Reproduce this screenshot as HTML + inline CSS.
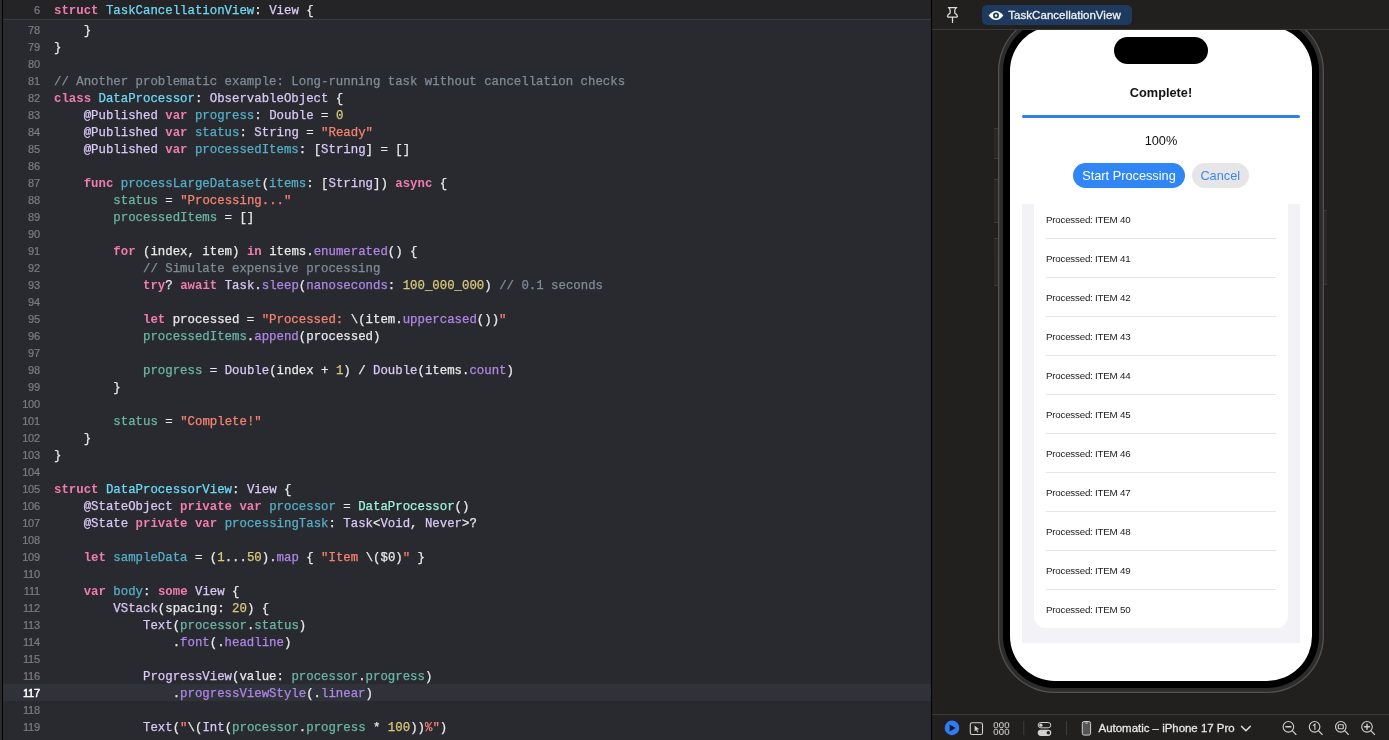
<!DOCTYPE html>
<html><head><meta charset="utf-8">
<style>
*{box-sizing:border-box;margin:0;padding:0}
html,body{width:1389px;height:740px;overflow:hidden;background:#1e1e1e}
body{position:relative;font-family:"Liberation Sans",sans-serif}
#editor{position:absolute;left:0;top:0;width:931px;height:740px;background:#292a30;overflow:hidden;will-change:transform}
#lstrip{position:absolute;left:0;top:0;width:2px;height:740px;background:#2a2a2c}
#lline{position:absolute;left:2px;top:0;width:1px;height:740px;background:#000}
.row{position:absolute;left:3px;width:928px;height:17px;font-family:"Liberation Mono",monospace;white-space:pre;color:#e8e8e9}
.row.cur{background:#2f3239}
.ln{position:absolute;right:891.2px;top:2.5px;font-family:"Liberation Sans",sans-serif;font-size:11px;letter-spacing:-0.25px;line-height:13px;color:#7c7c80;text-align:right;-webkit-text-stroke:0.2px currentColor}
.cur .ln{color:#ffffff;-webkit-text-stroke:0.45px #fff}
.code{position:absolute;left:51px;top:2.5px;font-size:12.36px;line-height:14px;-webkit-text-stroke:0.25px currentColor}
.sticky{position:absolute;left:0;top:0;width:931px;height:20px;background:#242427;border-bottom:1px solid #3a3a40}
.k{color:#f07cb0;font-weight:bold;-webkit-text-stroke:0}
.t{color:#dac8f6}
.f{color:#af86e6}
.d{color:#55afc8}
.dt{color:#6ed9f6}
.p{color:#6ab6a5}
.pt{color:#9ef1dd}
.s{color:#f88271}
.n{color:#d9c97c}
.c{color:#7f8c98}
#div{position:absolute;left:931px;top:0;width:1px;height:740px;background:#000}
#canvas{position:absolute;left:932px;top:0;width:457px;height:740px;background:#22201f;overflow:hidden;will-change:transform}
#topbar{position:absolute;left:0;top:0;width:457px;height:30px;border-bottom:1px solid #3a3a3a}
#botbar{position:absolute;left:0;top:714px;width:457px;height:26px;border-top:1px solid #3a3a3a;background:#22201f}

.btn{position:absolute;width:5px;background:#2a2827;border-top:1px solid #3a3938;border-bottom:1px solid #3a3938}
#phone{position:absolute;left:66px;top:0;width:326px;height:693px}
#rim{position:absolute;left:0;top:13.5px;width:326px;height:679px;border-radius:57px;background:#2c2c2c;box-shadow:inset 0 0 0 1.3px #525150}
#bezel{position:absolute;left:5px;top:18.5px;width:316px;height:669px;border-radius:52px;background:#000}
#screen{position:absolute;left:12px;top:25.5px;width:302px;height:655.5px;border-radius:45px;background:#fff;overflow:hidden}
#island{position:absolute;left:104px;top:11.2px;width:94px;height:27.2px;border-radius:13.6px;background:#000}
#title{position:absolute;left:0;width:302px;top:59px;text-align:center;font-weight:bold;font-size:12.75px;line-height:15px;color:#111}
#pbar{position:absolute;left:12px;top:89.5px;width:278px;height:3px;border-radius:2px;background:#2f80ee}
#pct{position:absolute;left:0;width:302px;top:107px;text-align:center;font-size:12.75px;line-height:15px;color:#111}
#bstart{position:absolute;left:63px;top:137.5px;width:112px;height:25.4px;border-radius:12.7px;background:#2f86f4;color:#fff;font-size:12.75px;line-height:26.6px;text-align:center}
#bcancel{position:absolute;left:181.5px;top:137.5px;width:57.5px;height:25.4px;border-radius:12.7px;background:#e6e6e9;color:#3f88ea;font-size:12.75px;line-height:26.6px;text-align:center}
#list{position:absolute;left:12px;top:178.5px;width:278px;height:439px;background:#f2f2f7;overflow:hidden}
#card{position:absolute;left:12px;top:-200px;width:254px;height:624px;background:#fff;border-radius:12px}
.it{position:absolute;left:12px;font-size:9.75px;letter-spacing:-0.22px;line-height:12px;color:#1a1a1a;white-space:nowrap}
.sep{position:absolute;left:12px;width:230px;height:1px;background:#e7e7ea}
#topbar{background:#22201f}
#pin{position:absolute;left:14px;top:6px}
#badge{position:absolute;left:50px;top:5px;width:150px;height:19.5px;border-radius:5px;background:#1e3a5e}
#eye{position:absolute;left:5.8px;top:5px}
#badge span{position:absolute;left:26.3px;top:3px;font-size:11.5px;letter-spacing:0.04px;line-height:14px;color:#f0f0f0;white-space:nowrap;-webkit-text-stroke:0.3px #f0f0f0}
</style></head><body>
<div id="editor">
<div class="row" style="top:21px"><span class="ln">78</span><span class="code">    }</span></div>
<div class="row" style="top:38px"><span class="ln">79</span><span class="code">}</span></div>
<div class="row" style="top:55px"><span class="ln">80</span><span class="code"></span></div>
<div class="row" style="top:72px"><span class="ln">81</span><span class="code"><span class="c">// Another problematic example: Long-running task without cancellation checks</span></span></div>
<div class="row" style="top:89px"><span class="ln">82</span><span class="code"><span class="k">class</span> <span class="dt">DataProcessor</span>: <span class="t">ObservableObject</span> {</span></div>
<div class="row" style="top:106px"><span class="ln">83</span><span class="code">    <span class="t">@Published</span> <span class="k">var</span> <span class="d">progress</span>: <span class="t">Double</span> = <span class="n">0</span></span></div>
<div class="row" style="top:123px"><span class="ln">84</span><span class="code">    <span class="t">@Published</span> <span class="k">var</span> <span class="d">status</span>: <span class="t">String</span> = <span class="s">&quot;Ready&quot;</span></span></div>
<div class="row" style="top:140px"><span class="ln">85</span><span class="code">    <span class="t">@Published</span> <span class="k">var</span> <span class="d">processedItems</span>: [<span class="t">String</span>] = []</span></div>
<div class="row" style="top:157px"><span class="ln">86</span><span class="code"></span></div>
<div class="row" style="top:174px"><span class="ln">87</span><span class="code">    <span class="k">func</span> <span class="d">processLargeDataset</span>(<span class="d">items</span>: [<span class="t">String</span>]) <span class="k">async</span> {</span></div>
<div class="row" style="top:191px"><span class="ln">88</span><span class="code">        <span class="p">status</span> = <span class="s">&quot;Processing...&quot;</span></span></div>
<div class="row" style="top:208px"><span class="ln">89</span><span class="code">        <span class="p">processedItems</span> = []</span></div>
<div class="row" style="top:225px"><span class="ln">90</span><span class="code"></span></div>
<div class="row" style="top:242px"><span class="ln">91</span><span class="code">        <span class="k">for</span> (index, item) <span class="k">in</span> items.<span class="f">enumerated</span>() {</span></div>
<div class="row" style="top:259px"><span class="ln">92</span><span class="code">            <span class="c">// Simulate expensive processing</span></span></div>
<div class="row" style="top:276px"><span class="ln">93</span><span class="code">            <span class="k">try</span>? <span class="k">await</span> <span class="t">Task</span>.<span class="f">sleep</span>(<span class="f">nanoseconds</span>: <span class="n">100_000_000</span>) <span class="c">// 0.1 seconds</span></span></div>
<div class="row" style="top:293px"><span class="ln">94</span><span class="code"></span></div>
<div class="row" style="top:310px"><span class="ln">95</span><span class="code">            <span class="k">let</span> processed = <span class="s">&quot;Processed: </span>\(item.<span class="f">uppercased</span>())<span class="s">&quot;</span></span></div>
<div class="row" style="top:327px"><span class="ln">96</span><span class="code">            <span class="p">processedItems</span>.<span class="f">append</span>(processed)</span></div>
<div class="row" style="top:344px"><span class="ln">97</span><span class="code"></span></div>
<div class="row" style="top:361px"><span class="ln">98</span><span class="code">            <span class="p">progress</span> = <span class="t">Double</span>(index + <span class="n">1</span>) / <span class="t">Double</span>(items.<span class="f">count</span>)</span></div>
<div class="row" style="top:378px"><span class="ln">99</span><span class="code">        }</span></div>
<div class="row" style="top:395px"><span class="ln">100</span><span class="code"></span></div>
<div class="row" style="top:412px"><span class="ln">101</span><span class="code">        <span class="p">status</span> = <span class="s">&quot;Complete!&quot;</span></span></div>
<div class="row" style="top:429px"><span class="ln">102</span><span class="code">    }</span></div>
<div class="row" style="top:446px"><span class="ln">103</span><span class="code">}</span></div>
<div class="row" style="top:463px"><span class="ln">104</span><span class="code"></span></div>
<div class="row" style="top:480px"><span class="ln">105</span><span class="code"><span class="k">struct</span> <span class="dt">DataProcessorView</span>: <span class="t">View</span> {</span></div>
<div class="row" style="top:497px"><span class="ln">106</span><span class="code">    <span class="t">@StateObject</span> <span class="k">private</span> <span class="k">var</span> <span class="d">processor</span> = <span class="pt">DataProcessor</span>()</span></div>
<div class="row" style="top:514px"><span class="ln">107</span><span class="code">    <span class="t">@State</span> <span class="k">private</span> <span class="k">var</span> <span class="d">processingTask</span>: <span class="t">Task</span>&lt;<span class="t">Void</span>, <span class="t">Never</span>&gt;?</span></div>
<div class="row" style="top:531px"><span class="ln">108</span><span class="code"></span></div>
<div class="row" style="top:548px"><span class="ln">109</span><span class="code">    <span class="k">let</span> <span class="d">sampleData</span> = (<span class="n">1</span>...<span class="n">50</span>).<span class="f">map</span> { <span class="s">&quot;Item </span>\($0)<span class="s">&quot;</span> }</span></div>
<div class="row" style="top:565px"><span class="ln">110</span><span class="code"></span></div>
<div class="row" style="top:582px"><span class="ln">111</span><span class="code">    <span class="k">var</span> <span class="d">body</span>: <span class="k">some</span> <span class="t">View</span> {</span></div>
<div class="row" style="top:599px"><span class="ln">112</span><span class="code">        <span class="t">VStack</span>(spacing: <span class="n">20</span>) {</span></div>
<div class="row" style="top:616px"><span class="ln">113</span><span class="code">            <span class="t">Text</span>(<span class="p">processor</span>.<span class="p">status</span>)</span></div>
<div class="row" style="top:633px"><span class="ln">114</span><span class="code">                .<span class="f">font</span>(.<span class="f">headline</span>)</span></div>
<div class="row" style="top:650px"><span class="ln">115</span><span class="code"></span></div>
<div class="row" style="top:667px"><span class="ln">116</span><span class="code">            <span class="t">ProgressView</span>(value: <span class="p">processor</span>.<span class="p">progress</span>)</span></div>
<div class="row cur" style="top:684px"><span class="ln">117</span><span class="code">                .<span class="f">progressViewStyle</span>(.<span class="f">linear</span>)</span></div>
<div class="row" style="top:701px"><span class="ln">118</span><span class="code"></span></div>
<div class="row" style="top:718px"><span class="ln">119</span><span class="code">            <span class="t">Text</span>(<span class="s">&quot;</span>\(<span class="t">Int</span>(<span class="p">processor</span>.<span class="p">progress</span> * <span class="n">100</span>))<span class="s">%&quot;</span>)</span></div>
<div class="row" style="top:735px"><span class="ln">120</span><span class="code"></span></div>
<div class="sticky"><div class="row" style="top:1.5px"><span class="ln">6</span><span class="code"><span class="k">struct</span> <span class="dt">TaskCancellationView</span>: <span class="t">View</span> {</span></div></div>
<div id="lstrip"></div><div id="lline"></div>
</div>
<div id="div"></div>
<div id="canvas">
  <div class="btn" style="left:62px;top:128px;height:31px"></div><div class="btn" style="left:62px;top:179px;height:44px"></div><div class="btn" style="left:62px;top:238px;height:48px"></div><div class="btn" style="left:390px;top:210px;height:75px"></div>
  <div id="phone">
    <div id="rim"></div>
    <div id="bezel"></div>
    <div id="screen">
      <div id="island"></div>
      <div id="title">Complete!</div>
      <div id="pbar"></div>
      <div id="pct">100%</div>
      <div id="bstart">Start Processing</div>
      <div id="bcancel">Cancel</div>
      <div id="list">
        <div id="card">
<div class="it" style="top:209.5px">Processed: ITEM 40</div>
<div class="sep" style="top:234px"></div>
<div class="it" style="top:248.5px">Processed: ITEM 41</div>
<div class="sep" style="top:273px"></div>
<div class="it" style="top:287.5px">Processed: ITEM 42</div>
<div class="sep" style="top:312px"></div>
<div class="it" style="top:326.5px">Processed: ITEM 43</div>
<div class="sep" style="top:351px"></div>
<div class="it" style="top:365.5px">Processed: ITEM 44</div>
<div class="sep" style="top:390px"></div>
<div class="it" style="top:404.5px">Processed: ITEM 45</div>
<div class="sep" style="top:429px"></div>
<div class="it" style="top:443.5px">Processed: ITEM 46</div>
<div class="sep" style="top:468px"></div>
<div class="it" style="top:482.5px">Processed: ITEM 47</div>
<div class="sep" style="top:507px"></div>
<div class="it" style="top:521.5px">Processed: ITEM 48</div>
<div class="sep" style="top:546px"></div>
<div class="it" style="top:560.5px">Processed: ITEM 49</div>
<div class="sep" style="top:585px"></div>
<div class="it" style="top:599.5px">Processed: ITEM 50</div>
        </div>
      </div>
    </div>
  </div>
  <div id="topbar">
    <svg id="pin" width="14" height="18" viewBox="0 0 14 18"><path d="M2.4 1.5H10.8Q8.8 2.6 8.8 4.2V7.1Q11.4 8.4 11.4 10.6Q11.4 11.1 10.9 11.1H2Q1.5 11.1 1.5 10.6Q1.5 8.4 4.1 7.1V4.2Q4.1 2.6 2.4 1.5Z M6.5 11.1V16.4" fill="none" stroke="#dcdcdc" stroke-width="1.25" stroke-linecap="round" stroke-linejoin="round"/></svg>
    <div id="badge"><svg id="eye" width="16" height="11" viewBox="0 0 16 11"><path d="M0.6 5.5Q8 -3.5 15.4 5.5Q8 14.5 0.6 5.5Z" fill="#fff"/><circle cx="8" cy="5.5" r="3" fill="#1c3a60"/><circle cx="8" cy="5.5" r="1.2" fill="#fff"/></svg><span>TaskCancellationView</span></div>
  </div>
  <div id="botbar"><svg width="457" height="26" viewBox="932 714.8 457 26" style="position:absolute;left:0;top:0">
  <circle cx="952" cy="727.7" r="7.3" fill="#2f7cf6"/>
  <path d="M949.6 724.2L949.6 731.2L955.6 727.7Z" fill="#1a1a1a"/>
  <rect x="970.3" y="722.5" width="12.2" height="11.8" rx="1.8" fill="none" stroke="#d0d0d0" stroke-width="1.1"/>
  <path d="M974.6 725.2L974.6 731.2L976.1 729.8L977.4 732.2L978.3 731.7L977.1 729.4L979.2 729.1Z" fill="#d0d0d0"/>
  <g fill="none" stroke="#d0d0d0" stroke-width="1">
    <rect x="994.1" y="722.5" width="3.6" height="5" rx="1.2"/><rect x="999.6" y="722.5" width="3.6" height="5" rx="1.2"/><rect x="1005.1" y="722.5" width="3.6" height="5" rx="1.2"/>
    <rect x="994.1" y="729.2" width="3.6" height="5" rx="1.2"/><rect x="999.6" y="729.2" width="3.6" height="5" rx="1.2"/><rect x="1005.1" y="729.2" width="3.6" height="5" rx="1.2"/>
  </g>
  <rect x="1023.3" y="721" width="1" height="14" fill="#3e3e3e"/>
  <rect x="1038.2" y="722.3" width="12.6" height="5.3" rx="2.65" fill="none" stroke="#d0d0d0" stroke-width="1"/>
  <circle cx="1040.9" cy="724.95" r="1.6" fill="#d0d0d0"/>
  <rect x="1037.7" y="729.5" width="13.6" height="6.2" rx="3.1" fill="#d0d0d0"/>
  <circle cx="1048.3" cy="732.6" r="1.7" fill="#22201f"/>
  <rect x="1066" y="721" width="1" height="14" fill="#3e3e3e"/>
  <rect x="1082.3" y="721.3" width="8.3" height="13.6" rx="1.8" fill="#555" stroke="#d0d0d0" stroke-width="1"/>
  <rect x="1085" y="722.4" width="3" height="0.9" rx="0.45" fill="#d0d0d0"/>
  <text x="1098.6" y="731.8" font-family="Liberation Sans" font-size="11.6" fill="#e6e6e6" stroke="#e6e6e6" stroke-width="0.3" textLength="136" lengthAdjust="spacingAndGlyphs">Automatic – iPhone 17 Pro</text>
  <path d="M1241.6 726.2L1245.9 730.6L1250.2 726.2" fill="none" stroke="#e0e0e0" stroke-width="1.5" stroke-linecap="round" stroke-linejoin="round"/>
  <g fill="none" stroke="#d0d0d0" stroke-width="1.1" stroke-linecap="round">
    <circle cx="1288.4" cy="726.6" r="5.3"/><path d="M1292.2 730.4L1296 734.3"/><path d="M1286 726.6h4.8" stroke-width="1.6"/>
    <circle cx="1314.6" cy="726.6" r="5.3"/><path d="M1318.4 730.4L1322.2 734.3"/><path d="M1313.4 725.2l1.5-1.3v5.3"/>
    <circle cx="1340.8" cy="726.6" r="5.3"/><path d="M1344.6 730.4L1348.4 734.3"/><rect x="1338.3" y="724.6" width="5" height="4" rx="0.6"/>
    <circle cx="1367" cy="726.6" r="5.3"/><path d="M1370.8 730.4L1374.6 734.3"/><path d="M1364.5 726.6h5M1367 724.1v5" stroke-width="1.4"/>
  </g>
</svg>
</div>
</div>
</body></html>
